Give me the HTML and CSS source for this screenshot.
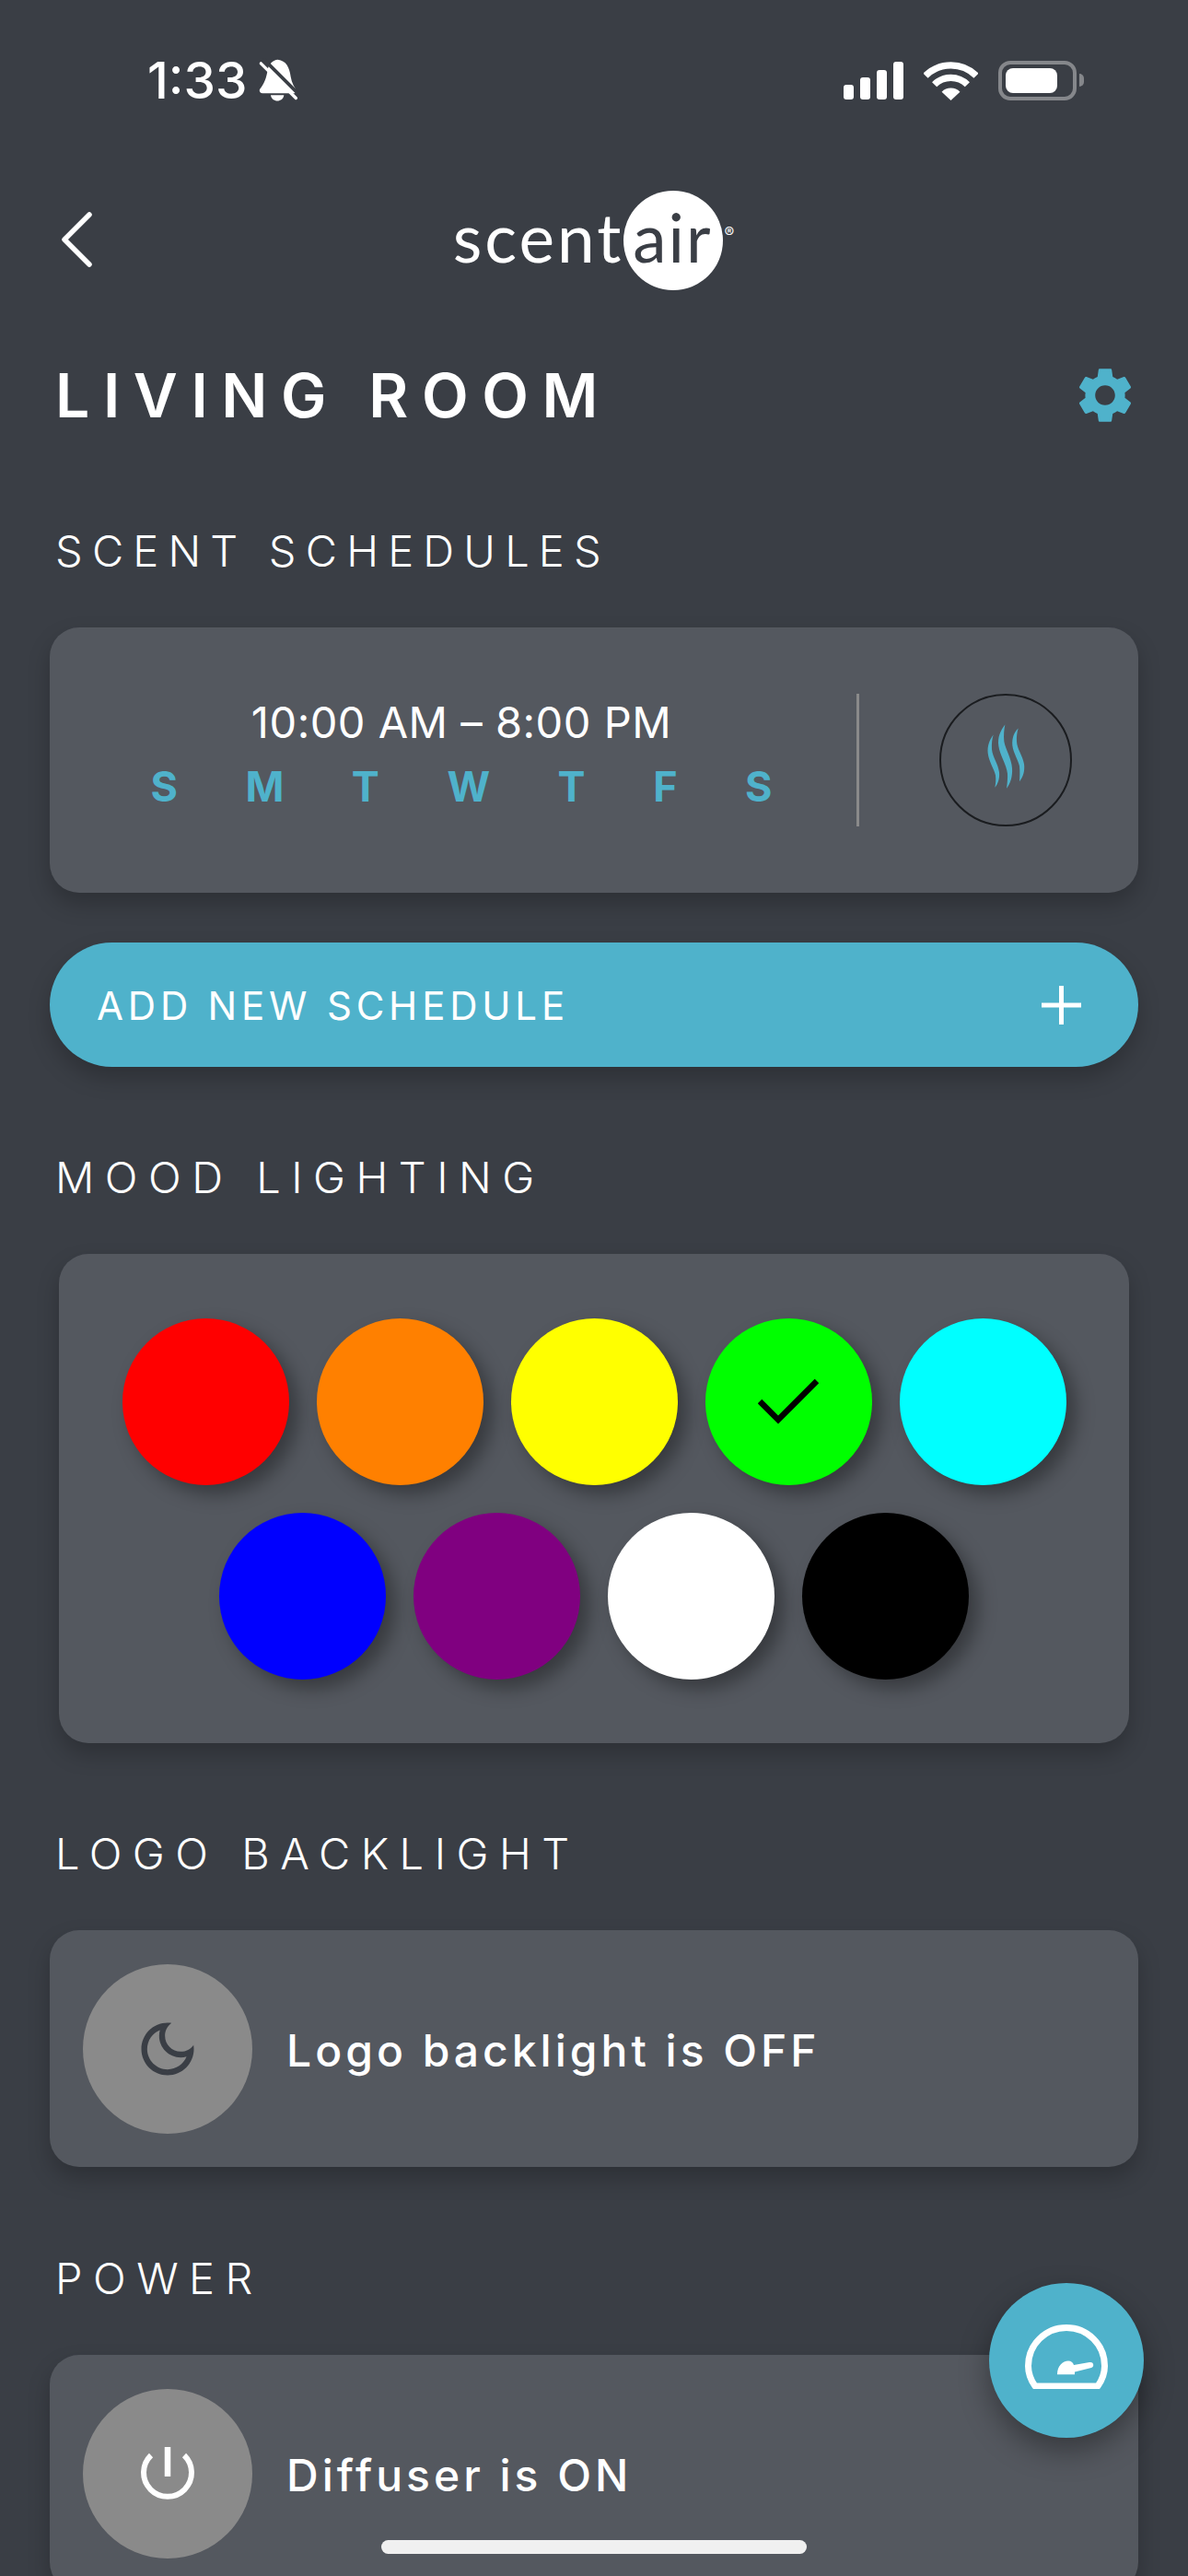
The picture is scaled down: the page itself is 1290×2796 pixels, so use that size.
FILE: index.html
```html
<!DOCTYPE html>
<html lang="en">

<head>
    <meta charset="UTF-8">
    <meta name="viewport" content="width=device-width, initial-scale=1.0">
    <title>Living Room</title>
    <link rel="stylesheet" href="styles.css">
</head>

<body>
    <div class="screen">

        <div class="status-bar">
            <div class="status-left">
                <span class="clock">1:33</span>
                <svg class="bell" viewBox="480 70 132 146">
                    <path fill="#fff" d="M545 75C572 78 583 100 587 130C590 150 600 165 607 178L600 184H495C487 184 483 176 487 170C500 155 508 135 512 108C515 90 530 76 545 75Z" />
                    <path fill="#fff" d="M522 190H565C562 215 525 215 522 190Z" />
                    <path stroke="#3a3e45" stroke-width="11" d="M498 72L618 192" />
                    <path stroke="#fff" stroke-width="10" stroke-linecap="round" d="M490 87L604 200" />
                </svg>
            </div>
            <div class="status-right">
                <div class="signal">
                    <span class="bar bar-1"></span>
                    <span class="bar bar-2"></span>
                    <span class="bar bar-3"></span>
                    <span class="bar bar-4"></span>
                </div>
                <svg class="wifi" viewBox="340 70 176 136">
                    <path fill="none" stroke="#fff" stroke-width="22" d="M345 122A118 118 0 0 1 511 122" />
                    <path fill="none" stroke="#fff" stroke-width="22" d="M374 151A76 76 0 0 1 482 151" />
                    <path fill="#fff" d="M428 203L398 175A42 42 0 0 1 458 175Z" />
                </svg>
                <div class="battery">
                    <div class="battery-level"></div>
                </div>
                <div class="battery-nub"></div>
            </div>
        </div>

        <div class="top-bar">
            <svg class="back" viewBox="0 0 40 60">
                <path fill="none" stroke="#fff" stroke-width="5.5" stroke-linecap="round" stroke-linejoin="round" d="M33 3L6 30L33 57" />
            </svg>
            <div class="logo">
                <span class="logo-scent">scent</span>
                <span class="logo-circle">air</span>
                <span class="logo-reg">®</span>
            </div>
        </div>

        <div class="title-row">
            <h1>LIVING ROOM</h1>
            <svg class="gear" viewBox="0 0 24 24">
                <path fill="#4fb2cb" d="M19.14 12.94c.04-.3.06-.61.06-.94 0-.32-.02-.64-.07-.94l2.03-1.58c.18-.14.23-.41.12-.61l-1.92-3.32c-.12-.22-.37-.29-.59-.22l-2.39.96c-.5-.38-1.03-.7-1.62-.94l-.36-2.54c-.04-.24-.24-.41-.48-.41h-3.84c-.24 0-.43.17-.47.41l-.36 2.54c-.59.24-1.13.57-1.62.94l-2.39-.96c-.22-.08-.47 0-.59.22L2.74 8.87c-.12.21-.08.47.12.61l2.03 1.58c-.05.3-.09.63-.09.94s.02.64.07.94l-2.03 1.58c-.18.14-.23.41-.12.61l1.92 3.32c.12.22.37.29.59.22l2.39-.96c.5.38 1.03.7 1.62.94l.36 2.54c.05.24.24.41.48.41h3.84c.24 0 .44-.17.47-.41l.36-2.54c.59-.24 1.13-.56 1.62-.94l2.39.96c.22.08.47 0 .59-.22l1.92-3.32c.12-.22.07-.47-.12-.61l-2.01-1.58zM12 15.6c-1.98 0-3.6-1.62-3.6-3.6s1.62-3.6 3.6-3.6 3.6 1.62 3.6 3.6-1.62 3.6-3.6 3.6z" />
            </svg>
        </div>

        <section class="first">
            <h2>SCENT SCHEDULES</h2>
            <div class="card schedule-card">
                <div class="schedule-info">
                    <div class="schedule-time">10:00 AM – 8:00 PM</div>
                    <div class="days">
                        <span>S</span><span>M</span><span>T</span><span>W</span><span>T</span><span>F</span><span>S</span>
                    </div>
                </div>
                <div class="divider"></div>
                <div class="scent-toggle">
                    <svg class="flames" viewBox="200 160 150 230">
                        <path fill="#4fb2cb" d="M235 203C222 220 215 240 217 262C220 290 238 315 242 335C244 350 242 365 240 375C250 362 256 345 254 325C250 295 232 275 230 250C229 232 231 215 235 203Z" />
                        <path fill="#4fb2cb" d="M273 170C258 190 248 210 252 240C256 270 278 300 281 330C282 345 280 365 278 378C290 362 298 340 296 312C294 280 274 250 270 225C268 205 270 185 273 170Z" />
                        <path fill="#4fb2cb" d="M316 182C302 195 295 215 297 238C300 262 316 285 320 305C322 325 321 340 320 355C332 340 338 320 335 298C330 270 312 250 311 225C310 210 312 195 316 182Z" />
                    </svg>
                </div>
            </div>
            <div class="add-button">
                <span>ADD NEW SCHEDULE</span>
                <svg class="plus" viewBox="0 0 43 42">
                    <path stroke="#fff" stroke-width="5" d="M21.5 0V42M0 21H43" />
                </svg>
            </div>
        </section>

        <section>
            <h2>MOOD LIGHTING</h2>
            <div class="card mood-card">
                <div class="swatch red"></div>
                <div class="swatch orange"></div>
                <div class="swatch yellow"></div>
                <div class="swatch lime">
                    <svg class="check" viewBox="0 0 66 50">
                        <path fill="none" stroke="#000" stroke-width="6.500" d="M2 24L22 44L64 2" />
                    </svg>
                </div>
                <div class="swatch cyan"></div>
                <div class="swatch blue"></div>
                <div class="swatch purple"></div>
                <div class="swatch white"></div>
                <div class="swatch black"></div>
            </div>
        </section>

        <section>
            <h2>LOGO BACKLIGHT</h2>
            <div class="card toggle-card">
                <div class="round-btn">
                    <svg class="moon" viewBox="0 0 24 24">
                        <path fill="#3a3e45" d="M9.37,5.51C9.19,6.15,9.1,6.82,9.1,7.5c0,4.08,3.32,7.4,7.4,7.4c0.68,0,1.35-0.09,1.99-0.27C17.45,17.19,14.93,19,12,19 c-3.86,0-7-3.14-7-7C5,9.07,6.81,6.55,9.37,5.51z M12,3c-4.97,0-9,4.03-9,9s4.03,9,9,9s9-4.03,9-9c0-0.46-0.04-0.92-0.1-1.36 c-0.98,1.37-2.58,2.26-4.4,2.26c-2.98,0-5.4-2.42-5.4-5.4c0-1.81,0.89-3.42,2.26-4.4C12.92,3.04,12.46,3,12,3L12,3z" />
                    </svg>
                </div>
                <span class="toggle-label">Logo backlight is OFF</span>
            </div>
        </section>

        <section class="last">
            <h2>POWER</h2>
            <div class="card toggle-card">
                <div class="round-btn">
                    <svg class="power" viewBox="0 0 64 64">
                        <path fill="none" stroke="#fff" stroke-width="6" d="M14 12A26 26 0 1 0 50 12" />
                        <path stroke="#fff" stroke-width="6.500" d="M32 3V35" />
                    </svg>
                </div>
                <span class="toggle-label">Diffuser is ON</span>
            </div>
        </section>

        <div class="fab">
            <svg class="gauge" viewBox="0 0 90 70">
                <path fill="none" stroke="#fff" stroke-width="7" stroke-linejoin="round" d="M11 67C6 60 3.500 52 3.500 45C3.500 22 22 3.500 45 3.500C68 3.500 86.500 22 86.500 45C86.500 52 84 60 79 67Z" />
                <path fill="#fff" d="M35 54.300C35 45 41 39.500 47 39.500C50 39.500 52 41 53 44L70 41C75 40 75.500 46 72 47L54 51.500V54.300Z" />
            </svg>
        </div>

        <div class="home-bar"></div>
    </div>
</body>

</html>
```

FILE: styles.css
```css
* {
    box-sizing: border-box;
}

body {
    margin: 0;
    background-color: #3a3e45;
    color: #fff;
    font-family: Inter, "Liberation Sans", sans-serif;
}

.screen {
    position: relative;
    height: 2796px;
    overflow: hidden;
}

/* status bar */
.status-bar {
    height: 174px;
    padding: 0 113px 0 160px;
    display: flex;
    justify-content: space-between;
    align-items: center;
}

.status-left,
.status-right {
    display: flex;
    align-items: center;
}

.clock {
    font-size: 55px;
    font-weight: 500;
    line-height: 1;
}

.bell {
    width: 44px;
    height: 49px;
    margin-left: 12px;
}

.signal {
    display: flex;
    align-items: flex-end;
    gap: 7px;
    height: 41px;
}

.bar {
    width: 11px;
    background-color: #fff;
    border-radius: 3px;
}

.bar-1 { height: 16px; }
.bar-2 { height: 24px; }
.bar-3 { height: 32px; }
.bar-4 { height: 41px; }

.wifi {
    width: 59px;
    height: 45px;
    margin-left: 22px;
}

.battery {
    width: 85px;
    height: 43px;
    margin-left: 22px;
    padding: 4px;
    border: 4px solid #85878b;
    border-radius: 13px;
}

.battery-level {
    width: 56px;
    height: 100%;
    background-color: #fff;
    border-radius: 8px;
}

.battery-nub {
    width: 5px;
    height: 14px;
    margin-left: 3px;
    background-color: #85878b;
    border-radius: 0 5px 5px 0;
}

/* header */
.top-bar {
    position: relative;
    height: 174px;
    display: flex;
    justify-content: center;
    align-items: center;
}

.back {
    position: absolute;
    left: 64px;
    top: 56px;
    width: 40px;
    height: 60px;
}

.logo {
    display: flex;
    align-items: center;
    position: relative;
    margin-left: -1px;
}

.logo-scent {
    font-family: Lato, sans-serif;
    font-size: 73px;
    font-weight: 400;
    letter-spacing: 3px;
    line-height: 1;
    margin-right: -1px;
    margin-bottom: 8px;
}

.logo-circle {
    width: 108px;
    height: 108px;
    border-radius: 50%;
    background-color: #fff;
    color: #3a3e45;
    font-family: Lato, sans-serif;
    font-size: 73px;
    font-weight: 400;
    letter-spacing: 2px;
    padding-bottom: 8px;
    display: flex;
    justify-content: center;
    align-items: center;
}

.logo-reg {
    font-size: 16px;
    margin-left: 2px;
    margin-bottom: 18px;
}

.title-row {
    height: 162px;
    padding: 0 56px 0 60px;
    display: flex;
    justify-content: space-between;
    align-items: center;
}

h1 {
    margin: 0;
    font-size: 66px;
    font-weight: 600;
    letter-spacing: 14.600px;
    line-height: 1;
}

.gear {
    width: 72px;
    height: 72px;
    margin-right: -2px;
}

/* sections */
section {
    margin-top: 90px;
    padding: 0 54px;
}

section.first {
    margin-top: 58px;
}

section.last {
    margin-top: 91px;
}

h2 {
    margin: 0 0 53px 6px;
    font-size: 47px;
    font-weight: 300;
    letter-spacing: 11.500px;
    line-height: 60px;
}

.first h2 {
    letter-spacing: 10.200px;
}

.card {
    background-color: #54585f;
    border-radius: 32px;
    box-shadow: 0 12px 24px rgba(0, 0, 0, 0.22);
}

/* schedule */
.schedule-card {
    height: 288px;
    padding: 0 72px 0 110px;
    display: flex;
    align-items: center;
}

.schedule-info {
    flex: none;
    width: 674px;
    margin-top: -14px;
    margin-right: 92px;
    text-align: center;
}

.schedule-time {
    margin-top: -4px;
    font-size: 47px;
    letter-spacing: 0.500px;
    line-height: 60px;
}

.days {
    display: flex;
    justify-content: center;
    gap: 73.500px;
    margin-top: 15px;
    color: #4fb2cb;
    font-size: 45px;
    font-weight: 700;
    line-height: 50px;
}

.divider {
    flex-shrink: 0;
    width: 3px;
    height: 144px;
    background-color: #8a8a8a;
}

.scent-toggle {
    flex-shrink: 0;
    width: 144px;
    height: 144px;
    margin-left: 87px;
    border: 2px solid #1a1c1f;
    border-radius: 50%;
    display: flex;
    justify-content: center;
    align-items: center;
}

.flames {
    width: 50px;
    height: 77px;
    margin-bottom: 8px;
}

.add-button {
    height: 135px;
    margin-top: 54px;
    padding: 0 62px 0 51px;
    background-color: #4fb2cb;
    border-radius: 68px;
    box-shadow: 0 12px 24px rgba(0, 0, 0, 0.22);
    display: flex;
    justify-content: space-between;
    align-items: center;
    font-size: 42px;
    font-weight: 400;
    letter-spacing: 4.800px;
}

.add-button span {
    margin-top: 2px;
}

.plus {
    width: 43px;
    height: 42px;
}

/* mood lighting */
.mood-card {
    margin: 0 10px;
    padding: 70px 68px 69px;
    display: flex;
    flex-wrap: wrap;
    justify-content: center;
    gap: 30px;
}

.swatch {
    width: 181px;
    height: 181px;
    border-radius: 50%;
    box-shadow: 10px 10px 20px rgba(0, 0, 0, 0.35);
    display: flex;
    justify-content: center;
    align-items: center;
}

.red { background-color: #f00; }
.orange { background-color: #ff8000; }
.yellow { background-color: #ff0; }
.lime { background-color: #0f0; }
.cyan { background-color: #0ff; }
.blue { background-color: #00f; }
.purple { background-color: #800080; }
.white { background-color: #fff; }
.black { background-color: #000; }

.check {
    width: 66px;
    height: 50px;
}

/* toggles */
.toggle-card {
    height: 257px;
    padding-left: 36px;
    display: flex;
    align-items: center;
}

.round-btn {
    width: 184px;
    height: 184px;
    border-radius: 50%;
    background-color: #8a8a8a;
    display: flex;
    justify-content: center;
    align-items: center;
}

.moon {
    width: 76px;
    height: 76px;
}

.power {
    width: 64px;
    height: 64px;
}

.toggle-label {
    margin-top: 3px;
    margin-left: 37px;
    font-size: 48px;
    font-weight: 500;
    letter-spacing: 4px;
}

/* floating button + home indicator */
.fab {
    position: absolute;
    left: 1074px;
    top: 2478px;
    width: 168px;
    height: 168px;
    border-radius: 50%;
    background-color: #4fb2cb;
    box-shadow: 0 14px 32px rgba(0, 0, 0, 0.35);
    display: flex;
    justify-content: center;
    align-items: center;
}

.gauge {
    width: 90px;
    height: 70px;
    margin-bottom: 8px;
}

.home-bar {
    position: absolute;
    left: 414px;
    top: 2757px;
    width: 462px;
    height: 15px;
    background-color: #f0f0f0;
    border-radius: 8px;
}
```
